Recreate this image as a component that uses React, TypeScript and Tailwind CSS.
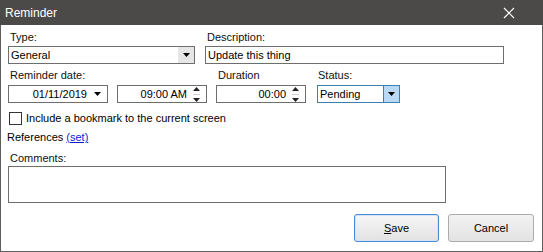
import React from "react";

function Caret() {
  return (
    <svg width="7" height="4" viewBox="0 0 7 4">
      <path d="M0 0h7L3.5 4z" fill="#000" />
    </svg>
  );
}

function Spinner() {
  return (
    <div className="flex flex-col items-center justify-center gap-[3px] w-[11px] h-full">
      <svg width="7" height="4" viewBox="0 0 7 4">
        <path d="M0 4h7L3.5 0z" fill="#222" />
      </svg>
      <div className="w-[7px] h-px bg-[#cfcfcf]" />
      <svg width="7" height="4" viewBox="0 0 7 4">
        <path d="M0 0h7L3.5 4z" fill="#222" />
      </svg>
    </div>
  );
}

function Label({ children, className = "" }: { children: React.ReactNode; className?: string }) {
  return <div className={"h-[13px] leading-[13px] text-[11px] text-[#111] " + className}>{children}</div>;
}

export default function App() {
  return (
    <div
      className="w-[543px] h-[252px] flex flex-col bg-white border-x border-b border-[#5e5e5e] text-[11px] text-black"
      style={{ fontFamily: '"Liberation Sans", Arial, sans-serif' }}
    >
      {/* title bar */}
      <div className="h-[25px] -mx-px bg-[#4b4a48] flex items-center justify-between pl-[5px] pr-[28px] shrink-0">
        <span className="text-white text-[12px]">Reminder</span>
        <svg width="12" height="12" viewBox="0 0 12 12">
          <path d="M1 1l10 10M11 1L1 11" stroke="#fff" strokeWidth="1.2" />
        </svg>
      </div>

      <div className="flex flex-col pl-[7px] pr-[8px] pt-[6px]">
        {/* row 1 */}
        <div className="flex">
          <div className="flex flex-col w-[187px]">
            <Label className="pl-[2px]">Type:</Label>
            <div className="mt-[2px] h-[18px] border border-[#6e6e6e] flex items-center">
              <span className="flex-1 pl-[2px]">General</span>
              <div className="w-[16px] h-full bg-[#e6e6e6] flex items-center justify-center">
                <Caret />
              </div>
            </div>
          </div>
          <div className="flex flex-col ml-[10px] w-[299px]">
            <Label className="pl-[2px]">Description:</Label>
            <div className="mt-[2px] h-[18px] border border-[#6e6e6e] flex items-center pl-[2px]">
              Update this thing
            </div>
          </div>
        </div>

        {/* row 2 */}
        <div className="flex mt-[5px]">
          <div className="flex flex-col w-[100px]">
            <Label className="pl-[2px]">Reminder date:</Label>
            <div className="mt-[3px] h-[18px] border border-[#6e6e6e] flex items-center">
              <span className="flex-1 text-right pr-[5px]">01/11/2019</span>
              <div className="w-[10px] mr-[5px] flex items-center justify-center">
                <Caret />
              </div>
            </div>
          </div>
          <div className="flex flex-col ml-[9px] w-[90px]">
            <Label>&nbsp;</Label>
            <div className="mt-[3px] h-[18px] border border-[#6e6e6e] flex items-center">
              <span className="flex-1 text-right pr-[4px]">09:00 AM</span>
              <Spinner />
              <div className="w-[4px]" />
            </div>
          </div>
          <div className="flex flex-col ml-[9px] w-[90px]">
            <Label className="pl-[2px]">Duration</Label>
            <div className="mt-[3px] h-[18px] border border-[#6e6e6e] flex items-center">
              <span className="flex-1 text-right pr-[4px]">00:00</span>
              <Spinner />
              <div className="w-[4px]" />
            </div>
          </div>
          <div className="flex flex-col ml-[11px] w-[83px]">
            <Label className="pl-[1px]">Status:</Label>
            <div className="mt-[3px] h-[18px] border border-[#3c7fb1] flex items-center">
              <span className="flex-1 pl-[2px]">Pending</span>
              <div className="w-[16px] h-full bg-[#b9d9f7] border-l border-[#3c7fb1] flex items-center justify-center">
                <Caret />
              </div>
            </div>
          </div>
        </div>

        {/* checkbox */}
        <div className="flex items-center mt-[8px] h-[14px] pl-[1px]">
          <div className="w-[13px] h-[13px] border border-[#333] bg-white" />
          <span className="ml-[4px]">Include a bookmark to the current screen</span>
        </div>

        {/* references */}
        <div className="mt-[6px] h-[13px] leading-[13px] -ml-[1px]">
          References{" "}
          <span className="text-[#0a1fd6] underline">(set)</span>
        </div>

        {/* comments */}
        <div className="flex flex-col mt-[8px] w-[438px]">
          <Label className="pl-[2px]">Comments:</Label>
          <div className="mt-[1px] h-[37px] border border-[#6e6e6e]" />
        </div>

        {/* buttons */}
        <div className="flex justify-end mt-[11px] gap-[9px]">
          <div className="w-[85px] h-[28px] rounded-[3px] border border-[#4a8ad4] bg-gradient-to-b from-[#f7f7f7] to-[#e2e2e2] shadow-[inset_0_0_0_1px_#d3e4f8] flex items-center justify-center">
            <span>
              <span className="underline">S</span>ave
            </span>
          </div>
          <div className="w-[86px] h-[28px] rounded-[3px] border border-[#acacac] bg-gradient-to-b from-[#f2f2f2] to-[#e3e3e3] flex items-center justify-center">
            Cancel
          </div>
        </div>
      </div>
    </div>
  );
}
